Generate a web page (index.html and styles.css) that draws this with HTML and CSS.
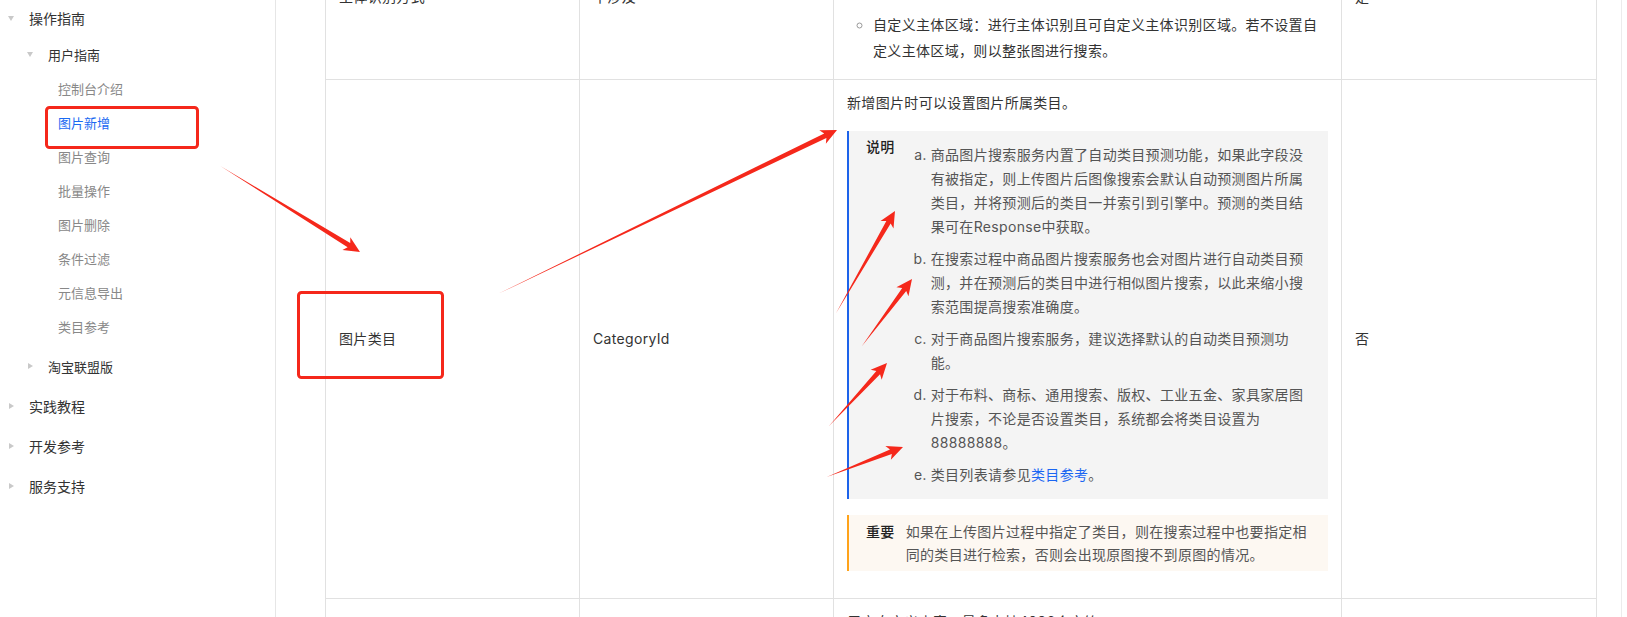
FILE: index.html
```html
<!DOCTYPE html>
<html lang="zh-CN">
<head>
<meta charset="utf-8">
<title>图片新增</title>
<link rel="stylesheet" href="styles.css">
</head>
<body>
<div class="page">
  <aside class="sidebar">
    <ul class="tree">
      <li class="node">
        <div class="label l1"><span class="caret down"></span>操作指南</div>
        <ul class="children">
          <li class="node">
            <div class="label l2"><span class="caret down"></span>用户指南</div>
            <ul class="leaves">
              <li class="leaf">控制台介绍</li>
              <li class="leaf active">图片新增</li>
              <li class="leaf">图片查询</li>
              <li class="leaf">批量操作</li>
              <li class="leaf">图片删除</li>
              <li class="leaf">条件过滤</li>
              <li class="leaf">元信息导出</li>
              <li class="leaf">类目参考</li>
            </ul>
          </li>
          <li class="node spaced">
            <div class="label l2"><span class="caret right"></span>淘宝联盟版</div>
          </li>
        </ul>
      </li>
      <li class="node spaced"><div class="label l1"><span class="caret right"></span>实践教程</div></li>
      <li class="node spaced"><div class="label l1"><span class="caret right"></span>开发参考</div></li>
      <li class="node spaced"><div class="label l1"><span class="caret right"></span>服务支持</div></li>
    </ul>
  </aside>

  <main class="main">
    <table class="params">
      <colgroup>
        <col class="c-name">
        <col class="c-key">
        <col class="c-desc">
        <col class="c-req">
      </colgroup>
      <tbody>
        <tr>
          <td>主体识别方式</td>
          <td>不涉及</td>
          <td class="top-cell">
            <ul class="circle-list">
              <li>不识别主体：不进行主体识别，直接以整张图进行搜索，适用于图片中只有单一商品的场景。</li>
              <li>识别图片中主体，以识别出的主体区域进行搜索。</li>
              <li>自定义主体区域：进行主体识别且可自定义主体识别区域。若不设置自定义主体区域，则以整张图进行搜索。</li>
            </ul>
          </td>
          <td>是</td>
        </tr>
        <tr>
          <td>图片类目</td>
          <td>CategoryId</td>
          <td class="desc">
            <p class="lead">新增图片时可以设置图片所属类目。</p>
            <div class="note">
              <div class="note-label">说明</div>
              <ol class="note-list">
                <li>商品图片搜索服务内置了自动类目预测功能，如果此字段没有被指定，则上传图片后图像搜索会默认自动预测图片所属类目，并将预测后的类目一并索引到引擎中。预测的类目结果可在Response中获取。</li>
                <li>在搜索过程中商品图片搜索服务也会对图片进行自动类目预测，并在预测后的类目中进行相似图片搜索，以此来缩小搜索范围提高搜索准确度。</li>
                <li>对于商品图片搜索服务，建议选择默认的自动类目预测功能。</li>
                <li>对于布料、商标、通用搜索、版权、工业五金、家具家居图片搜索，不论是否设置类目，系统都会将类目设置为88888888。</li>
                <li>类目列表请参见<a class="link" href="#">类目参考</a>。</li>
              </ol>
            </div>
            <div class="important">
              <div class="important-label">重要</div>
              <div class="important-text">如果在上传图片过程中指定了类目，则在搜索过程中也要指定相同的类目进行检索，否则会出现原图搜不到原图的情况。</div>
            </div>
          </td>
          <td>否</td>
        </tr>
        <tr>
          <td>自定义内容</td>
          <td>CustomContent</td>
          <td class="desc">
            <p class="lead">用户自定义内容，最多支持4096个字符。</p>
            <p class="lead">查询时会返回该字段，例如可添加图片的描述等文本。</p>
            <p class="lead">该字段为可选项。</p>
          </td>
          <td>否</td>
        </tr>
      </tbody>
    </table>
  </main>

  <svg class="annotations" width="1627" height="617" viewBox="0 0 1627 617" aria-hidden="true">
    <g fill="none" stroke="#f5281b" stroke-width="3">
      <rect x="46.5" y="107.5" width="151" height="40" rx="3"/>
      <rect x="298.5" y="292.5" width="144" height="85" rx="3"/>
    </g>
    <g fill="#f5281b">
      <g transform="translate(360 252) rotate(31.6)"><polygon points="-164,0 -13,-2.5 -16,-7.5 0,0 -16,7.5 -13,2.5"/></g>
      <g transform="translate(837 130) rotate(-25.8)"><polygon points="-377,0 -13,-2.5 -16,-7.5 0,0 -16,7.5 -13,2.5"/></g>
      <g transform="translate(895 211) rotate(-60)"><polygon points="-118,0 -13,-2.5 -16,-7.5 0,0 -16,7.5 -13,2.5"/></g>
      <g transform="translate(912 279) rotate(-53.3)"><polygon points="-84,0 -13,-2.5 -16,-7.5 0,0 -16,7.5 -13,2.5"/></g>
      <g transform="translate(887 363) rotate(-47.4)"><polygon points="-86,0 -13,-2.5 -16,-7.5 0,0 -16,7.5 -13,2.5"/></g>
      <g transform="translate(903 447) rotate(-21.5)"><polygon points="-82,0 -13,-2.5 -16,-7.5 0,0 -16,7.5 -13,2.5"/></g>
    </g>
  </svg>
</div>
</body>
</html>
```

FILE: styles.css
```css
* { box-sizing: border-box; }

html, body {
  margin: 0;
  padding: 0;
  background: #fff;
}

body {
  font-family: Inter, "Noto Sans CJK SC", sans-serif;
  color: #333;
}

.page {
  position: relative;
  display: flex;
  width: 1627px;
  height: 617px;
  overflow: hidden;
}

/* ---------- sidebar ---------- */
.sidebar {
  flex: none;
  width: 276px;
  border-right: 1px solid #e6e6e6;
}

.tree, .children, .leaves {
  list-style: none;
  margin: 0;
  padding: 0;
}

.spaced { margin-top: 4px; }

.label {
  display: flex;
  align-items: center;
  height: 36px;
  color: #333;
  white-space: nowrap;
}

.l1 {
  padding-left: 8px;
  font-size: 14px;
}

.l2 {
  padding-left: 27px;
  font-size: 13px;
}

.caret {
  flex: none;
  display: flex;
  align-items: center;
  justify-content: flex-start;
  width: 8px;
  height: 8px;
  margin-right: 13px;
}

.caret::before {
  content: "";
  display: block;
  width: 0;
  height: 0;
}

.caret.down::before {
  border-left: 3.5px solid transparent;
  border-right: 3.5px solid transparent;
  border-top: 5px solid #c9c9c9;
}

.caret.right::before {
  border-top: 3.5px solid transparent;
  border-bottom: 3.5px solid transparent;
  border-left: 5px solid #c9c9c9;
  margin-left: 1px;
}

.leaf {
  height: 34px;
  line-height: 34px;
  padding-left: 58px;
  font-size: 13px;
  color: #888;
  white-space: nowrap;
}

.leaf.active { color: #1a6af2; }

/* ---------- main ---------- */
.main {
  flex: 1;
  min-width: 0;
  overflow: hidden;
  padding-left: 49px;
  margin-right: 5px;
  border-right: 1px solid #ececec;
}

.params {
  border-collapse: collapse;
  table-layout: fixed;
  width: 1271px;
  margin-top: -87px;
}

.c-name { width: 254px; }
.c-key { width: 254px; }
.c-desc { width: 508px; }
.c-req { width: 255px; }

.params td {
  border: 1px solid #e1e1e1;
  padding: 11px 13px;
  vertical-align: middle;
  font-size: 14px;
  line-height: 24px;
  letter-spacing: 0.33px;
  color: #333;
}

.params td.top-cell {
  padding: 10px 13px 11px;
}

.circle-list {
  margin: 0 0 4px;
  padding-left: 26px;
  list-style: circle;
  line-height: 26px;
}

.circle-list li + li { margin-top: 1px; }
.circle-list li:last-child { margin-top: 9px; }

.circle-list li::marker { color: #999; }

.lead { margin: 0; }

.note {
  display: flex;
  margin-top: 16px;
  padding: 0 16px 0 17px;
  background: #f4f4f4;
  border-left: 2px solid #1d63ea;
}

.note-label,
.important-label {
  flex: none;
  font-weight: 500;
  color: #222;
  white-space: nowrap;
}

.note-label {
  padding-top: 4px;
}

.note-list {
  flex: 1;
  margin: 0;
  padding: 12px 0 12px 36px;
  list-style: lower-alpha;
  color: #555;
}

.note-list li + li { margin-top: 8px; }

.link {
  color: #1a66f2;
  text-decoration: none;
}

.important {
  display: flex;
  margin: 16px 0;
  padding: 5px 16px 5px 17px;
  background: #fdf8f2;
  border-left: 2px solid #ffa31a;
  line-height: 23px;
}

.important-text {
  flex: 1;
  margin-left: 11px;
  color: #555;
}

/* ---------- annotation overlay ---------- */
.annotations {
  position: absolute;
  left: 0;
  top: 0;
  pointer-events: none;
}
```
